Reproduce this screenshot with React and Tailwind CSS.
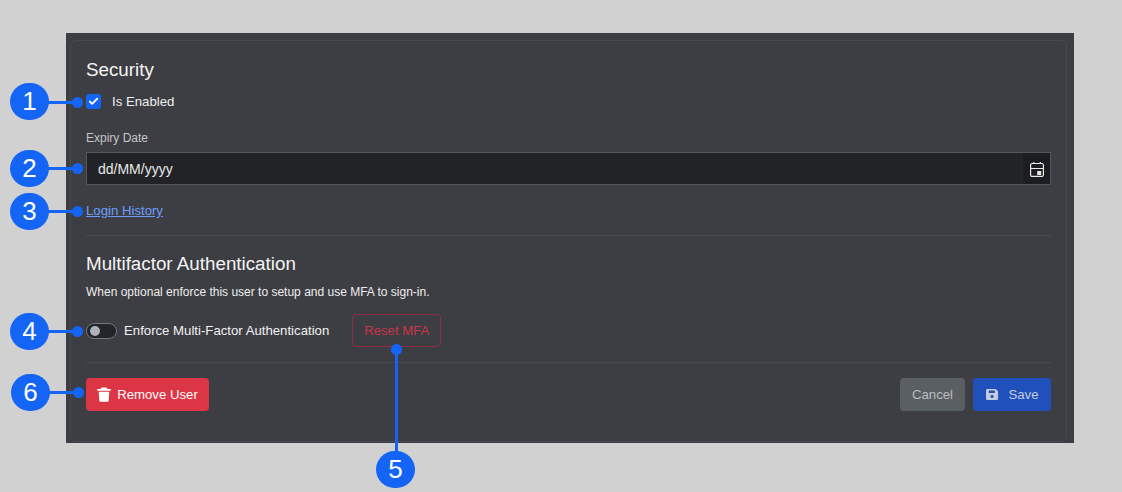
import { Check } from 'lucide-react';

const callouts = [
  { n: 1, cx: 29.5, cy: 101.5, ex: 77 },
  { n: 2, cx: 29.5, cy: 168, ex: 77 },
  { n: 3, cx: 29.5, cy: 211, ex: 77 },
  { n: 4, cx: 29.5, cy: 331, ex: 77 },
  { n: 6, cx: 30.5, cy: 392, ex: 78 },
];

function Callouts() {
  return (
    <>
      {callouts.map(({ n, cx, cy, ex }) => (
        <div key={n}>
          <div className="absolute h-[3px] bg-[#1464f6]" style={{ left: cx, top: cy - 1, width: ex - cx }} />
          <div className="absolute h-[11px] w-[11px] rounded-full bg-[#1464f6]" style={{ left: ex - 5.5, top: cy - 5 }} />
          <div
            className="absolute flex h-[37px] w-[39px] items-center justify-center rounded-full bg-[#1464f6] text-[26px] text-white"
            style={{ left: cx - 19.5, top: cy - 18.5 }}
          >
            {n}
          </div>
        </div>
      ))}
      <div className="absolute left-[395px] top-[350px] h-[105px] w-[3px] bg-[#1464f6]" />
      <div className="absolute left-[390.500px] top-[344px] h-[11px] w-[11px] rounded-full bg-[#1464f6]" />
      <div className="absolute left-[376px] top-[451px] flex h-[37px] w-[39px] items-center justify-center rounded-full bg-[#1464f6] text-[26px] text-white">
        5
      </div>
    </>
  );
}

function CalendarIcon() {
  return (
    <svg width="16" height="16" viewBox="0 0 16 16" fill="none" stroke="#e8e8e8" strokeWidth="1.2">
      <rect x="1.600" y="2.500" width="12.800" height="12.900" rx="1.500" />
      <path d="M1.600 7.500h12.800M4.700 0.900v2.200M11.300 0.900v2.200" />
      <rect x="8.200" y="10" width="4" height="4" fill="#e8e8e8" stroke="none" />
    </svg>
  );
}

function SaveIcon() {
  return (
    <svg width="13" height="13" viewBox="0 0 14 14" fill="#c3cbdc">
      <path d="M1.500 1h9L13 3.500v8A1.500 1.500 0 0 1 11.500 13h-10A1.500 1.500 0 0 1 0 11.500v-9A1.500 1.500 0 0 1 1.500 1z" />
      <rect x="3" y="2.600" width="6.500" height="2.800" rx="0.400" fill="#2050bb" />
      <circle cx="6.500" cy="9.200" r="1.700" fill="#2050bb" />
    </svg>
  );
}

function TrashIcon() {
  return (
    <svg width="14" height="15" viewBox="0 0 14 15" fill="#ffffff">
      <path d="M5 0.500h4a1 1 0 0 1 0.900 0.600L10.300 2H13a0.700 0.700 0 0 1 0 1.800H1A0.700 0.700 0 0 1 1 2h2.700l0.400-0.900A1 1 0 0 1 5 0.500z" />
      <path d="M1.700 4.800h10.600l-0.600 8.700a1.400 1.400 0 0 1-1.400 1.300H3.700a1.400 1.400 0 0 1-1.400-1.300z" />
    </svg>
  );
}

export default function App() {
  return (
    <div className="relative h-[492px] w-[1122px] overflow-hidden bg-[#d1d1d1] pl-[66px] pt-[33px] font-['Liberation_Sans',Arial,sans-serif]">
      <div className="h-[410px] w-[1008px] bg-[#3d3e43] pb-[1px] pl-[4px] pr-[7px] pt-[7px]">
        <div className="h-full rounded-[6px] border border-[#48494e] pl-[15px] pr-[15px] pt-[18px] text-white">
          <h2 className="text-[18.800px] leading-[22px] text-[#f4f4f4]">Security</h2>

          <div className="mt-[13px] flex h-[15px] items-center">
            <div className="flex h-[15px] w-[15px] items-center justify-center rounded-[3px] bg-[#1464f6]">
              <Check className="h-[11px] w-[11px] text-white" strokeWidth={4} />
            </div>
            <span className="ml-[11px] text-[13.200px] text-[#eeeeee]">Is Enabled</span>
          </div>

          <p className="mt-[22px] text-[12px] leading-[14px] text-[#c4c5c9]">Expiry Date</p>

          <div className="mt-[7px] flex h-[33px] items-stretch border border-[#54555a] bg-[#222326]">
            <span className="flex flex-1 items-center pl-[11px] pt-[2px] text-[14px] text-[#e8e8e8]">dd/MM/yyyy</span>
            <span className="flex w-[27px] items-center justify-center bg-[#1c1d20]">
              <CalendarIcon />
            </span>
          </div>

          <a href="#" className="mt-[18px] block w-fit text-[13.200px] leading-[15px] text-[#6d9eff] underline">
            Login History
          </a>

          <div className="mt-[17px] border-t border-[#4a4b50]" />

          <h2 className="mt-[17px] text-[18.800px] leading-[22px] text-[#f4f4f4]">Multifactor Authentication</h2>
          <p className="mt-[10px] text-[12px] leading-[14px] text-[#eeeeee]">
            When optional enforce this user to setup and use MFA to sign-in.
          </p>

          <div className="mt-[15px] flex h-[33px] items-center">
            <div className="flex h-[16px] w-[31px] items-center rounded-full border border-[#76777c] bg-[#242528] pl-[3px]">
              <div className="h-[10px] w-[10px] rounded-full bg-[#adb3ba]" />
            </div>
            <span className="ml-[7px] text-[13.200px] text-[#f2f2f2]">Enforce Multi-Factor Authentication</span>
            <button className="ml-[23px] h-[33px] w-[89px] rounded-[4px] border border-[#8c3040] text-[13.200px] text-[#c9354a]">
              Reset MFA
            </button>
          </div>

          <div className="mt-[15px] border-t border-[#4a4b50]" />

          <div className="mt-[15px] flex items-center justify-between">
            <button className="flex h-[33px] w-[123px] items-center justify-center gap-[6px] rounded-[4px] bg-[#dc3545] text-[13.200px] text-white">
              <TrashIcon />
              Remove User
            </button>
            <div className="flex gap-[8px]">
              <button className="h-[33px] w-[65px] rounded-[4px] bg-[#5a5f63] text-[13.200px] text-[#bcbec1]">Cancel</button>
              <button className="flex h-[33px] w-[78px] items-center justify-center gap-[9px] rounded-[4px] bg-[#2050bb] pl-[1px] text-[13.200px] text-[#c3cbdc]">
                <SaveIcon />
                Save
              </button>
            </div>
          </div>
        </div>
      </div>
      <Callouts />
    </div>
  );
}
